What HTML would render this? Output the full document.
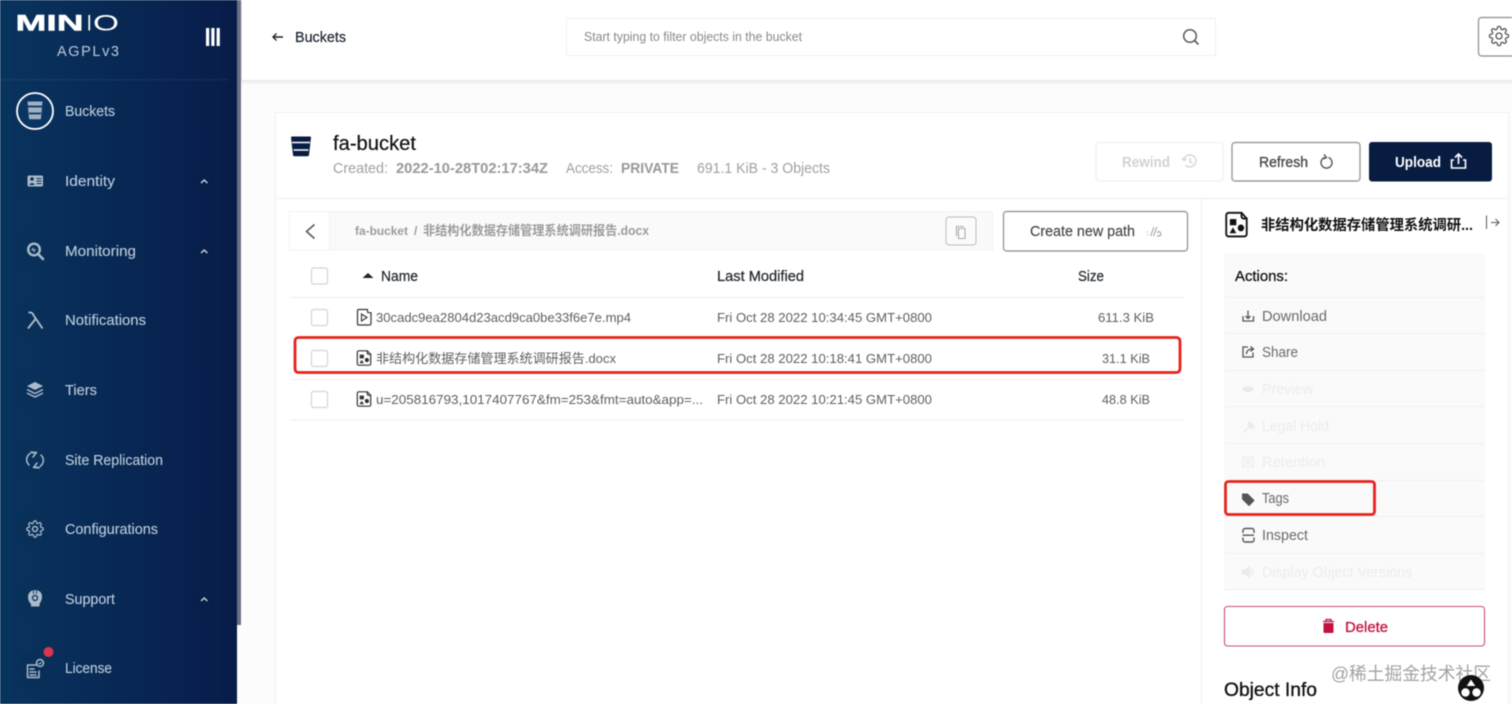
<!DOCTYPE html>
<html><head><meta charset="utf-8"><title>MinIO Console</title>
<style>
html,body{margin:0;padding:0;width:1512px;height:704px;overflow:hidden;background:#fff}
svg{display:block;filter:blur(.4px)}
text{font-family:"Liberation Sans","Noto Sans CJK SC",sans-serif}
.nav{font-size:15px;fill:#bccbdb;stroke:#bccbdb;stroke-width:.12}
.act{font-size:15px;fill:#6a6a6a}
.dis{font-size:15px;fill:#ececec}
.cell{font-size:13px;fill:#606060}
.th{font-size:15px;fill:#24292f;stroke:#24292f;stroke-width:.25}
.ln{stroke:#f0f0f0;stroke-width:1.2}
.ic{fill:none;stroke:#a9bacb;stroke-width:1.5;stroke-linecap:round;stroke-linejoin:round}
.cb{fill:#fff;stroke:#d4d4d4;stroke-width:1.2}
</style></head><body>
<svg xmlns="http://www.w3.org/2000/svg" width="1512" height="704" viewBox="0 0 1512 704">
<defs>
<linearGradient id="sb" x1="0" x2="1" y1="0" y2="0"><stop offset="0" stop-color="#08345e"/><stop offset="1" stop-color="#081c4a"/></linearGradient>
<linearGradient id="hs" x1="0" x2="0" y1="0" y2="1"><stop offset="0" stop-color="#e9e9e9"/><stop offset="1" stop-color="#fbfbfb"/></linearGradient>
<path id="gear" d="M19.4 15a1.65 1.65 0 0 0 .33 1.82l.06.06a2 2 0 0 1 0 2.83 2 2 0 0 1-2.83 0l-.06-.06a1.65 1.65 0 0 0-1.82-.33 1.65 1.65 0 0 0-1 1.51V21a2 2 0 0 1-2 2 2 2 0 0 1-2-2v-.09A1.65 1.65 0 0 0 9 19.4a1.65 1.65 0 0 0-1.82.33l-.06.06a2 2 0 0 1-2.83 0 2 2 0 0 1 0-2.83l.06-.06a1.65 1.65 0 0 0 .33-1.82 1.65 1.65 0 0 0-1.51-1H3a2 2 0 0 1-2-2 2 2 0 0 1 2-2h.09A1.65 1.65 0 0 0 4.6 9a1.65 1.65 0 0 0-.33-1.82l-.06-.06a2 2 0 0 1 0-2.83 2 2 0 0 1 2.83 0l.06.06a1.65 1.65 0 0 0 1.82.33H9a1.65 1.65 0 0 0 1-1.51V3a2 2 0 0 1 2-2 2 2 0 0 1 2 2v.09a1.65 1.65 0 0 0 1 1.51 1.65 1.65 0 0 0 1.82-.33l.06-.06a2 2 0 0 1 2.83 0 2 2 0 0 1 0 2.83l-.06.06a1.65 1.65 0 0 0-.33 1.82V9a1.65 1.65 0 0 0 1.51 1H21a2 2 0 0 1 2 2 2 2 0 0 1-2 2h-.09a1.65 1.65 0 0 0-1.51 1z"/>
<g id="doc">
<path d="M2.300 0.800H10.800V3a1.300 1.300 0 0 0 1.300 1.300H14.200V13.700a1.500 1.500 0 0 1-1.500 1.500H2.300a1.500 1.500 0 0 1-1.500-1.500V2.300a1.500 1.500 0 0 1 1.500-1.500z" fill="#fff" stroke="currentColor" stroke-width="1.200"/>
<path d="M10.800 .8L14.200 4.300" stroke="currentColor" stroke-width="1.100"/>
<rect x="3.200" y="4.600" width="4.200" height="3.800" fill="currentColor"/>
<circle cx="10.400" cy="10" r="2.100" fill="currentColor"/>
<path d="M3 13.300L5.200 9.700L7.400 13.300z" fill="currentColor"/>
</g>
</defs>

<!-- page background -->
<rect width="1512" height="704" fill="#fcfcfc"/>
<rect x="237" width="1275" height="80" fill="#fff"/>
<rect x="237" y="80" width="1275" height="5" fill="url(#hs)"/>

<!-- sidebar -->
<rect width="237" height="704" fill="url(#sb)"/>
<rect x="237" width="4" height="625" fill="#6e7084"/>
<rect x="241" width="1" height="80" fill="#e8e8e8"/>
<rect x="0" y="79" width="228" height="1.500" fill="#fff" opacity=".05"/>

<text x="15.500" y="30.500" font-size="22.500" font-weight="bold" fill="#fff" stroke="#fff" stroke-width=".5" textLength="68" lengthAdjust="spacingAndGlyphs">MIN</text>
<text x="86.800" y="30.500" font-size="22.500" fill="#fff" textLength="5" lengthAdjust="spacingAndGlyphs">I</text>
<text x="93" y="30.500" font-size="22.500" fill="#fff" textLength="26" lengthAdjust="spacingAndGlyphs">O</text>
<text x="57" y="56" font-size="14.500" fill="#bccbdb" textLength="62" lengthAdjust="spacing">AGPLv3</text>
<g fill="#fff"><rect x="206" y="28" width="3.200" height="18"/><rect x="211.300" y="28" width="3.200" height="18"/><rect x="216.600" y="28" width="3.200" height="18"/></g>

<!-- nav circles -->
<g fill="#0a3058" opacity=".9">
<circle cx="35" cy="181" r="19"/><circle cx="35" cy="251" r="19"/><circle cx="35" cy="320" r="19"/><circle cx="35" cy="390" r="19"/><circle cx="35" cy="460" r="19"/><circle cx="35" cy="529" r="19"/><circle cx="35" cy="599" r="19"/><circle cx="35" cy="669" r="19"/>
</g>
<circle cx="35" cy="111" r="18" fill="#0a3461" stroke="#fff" stroke-width="1.800"/>
<!-- Buckets icon -->
<path d="M27.500 101.500H42.500L41 118.500a1 1 0 0 1-1 .8H30a1 1 0 0 1-1-.8z" fill="#9fb0c2"/>
<path d="M28 106.500H42M29 113.500H41" stroke="#0a3461" stroke-width="1.700"/>
<!-- Identity -->
<rect x="27.500" y="175.500" width="15.500" height="11" rx="1.500" fill="#a9bacb"/>
<circle cx="32" cy="179" r="1.800" fill="#0a3058"/><path d="M29.500 185c0-2.500 5-2.500 5 0z" fill="#0a3058"/>
<path d="M36.500 178.500h5M36.500 181h5M36.500 183.500h5" stroke="#0a3058" stroke-width="1"/>
<!-- Monitoring -->
<circle cx="34" cy="249.500" r="5.800" fill="none" stroke="#a9bacb" stroke-width="2.400"/>
<path d="M38.500 254.500L43 259" stroke="#a9bacb" stroke-width="2.600" stroke-linecap="round"/>
<path d="M31.500 250.500l1.500-2 1 3 1.500-2.500" fill="none" stroke="#a9bacb" stroke-width="1"/>
<!-- lambda -->
<path d="M28.500 312.500c3.500-.5 4.500 1 5.500 3.500L42.500 328.500M35.500 319L28 328.500" fill="none" stroke="#a9bacb" stroke-width="1.900"/>
<!-- Tiers -->
<path d="M35 382l8 4-8 4-8-4z" fill="#a9bacb"/>
<path d="M27 389.500l8 4 8-4M27 393l8 4 8-4" fill="none" stroke="#a9bacb" stroke-width="1.500"/>
<!-- Site replication -->
<path class="ic" d="M30 453.500c-4 3-4.500 8-1 11.500M40 466.500c4-3 4.500-8 1-11.500M31 452l5 1-3 4M39 468l-5-1 3-4"/>
<path class="ic" d="M32 452.800c1.500-.5 3-.6 4.500-.3M38 467.200c-1.500.5-3 .6-4.500.3"/>
<!-- Configurations -->
<use href="#gear" transform="translate(26 520) scale(.75)" fill="none" stroke="#a9bacb" stroke-width="1.700"/>
<circle cx="35" cy="529" r="2.500" class="ic" stroke-width="1.200"/>
<!-- Support -->
<path d="M35 590c5 0 7.500 3.500 7 7.500-.3 3-1.500 4.500-2.500 6.500v2.500H31v-2.500c-1.500-1.500-3-4-3-7 0-4 3-7 7-7z" fill="#a9bacb"/>
<circle cx="35" cy="598" r="2.500" fill="none" stroke="#0a3058" stroke-width="1.200"/>
<path d="M33.500 590v4M36.500 590v4" stroke="#0a3058" stroke-width=".8"/>
<!-- License -->
<path class="ic" stroke-width="1.200" d="M37 665H27.500v12.500H39V671M30 669h4M30 672h6M30 675h6"/>
<circle cx="40" cy="663" r="3.500" class="ic" stroke-width="1.100"/>
<path d="M38.500 663l1.200 1.200 2-2.200" fill="none" stroke="#a9bacb" stroke-width="1"/>
<circle cx="48.500" cy="652" r="5" fill="#dc3550"/>
<!-- chevrons -->
<g fill="#071f4a" opacity=".55"><circle cx="204" cy="181" r="10"/><circle cx="204" cy="251" r="10"/><circle cx="204" cy="599" r="10"/></g>
<g fill="none" stroke="#d5dde6" stroke-width="1.300"><path d="M201 183l3.200-3 3.200 3M201 253l3.200-3 3.200 3M201 601l3.200-3 3.200 3"/></g>
<!-- nav labels -->
<text class="nav" x="65" y="116" textLength="50" lengthAdjust="spacingAndGlyphs">Buckets</text>
<text class="nav" x="65" y="186" textLength="50" lengthAdjust="spacingAndGlyphs">Identity</text>
<text class="nav" x="65" y="256" textLength="71" lengthAdjust="spacingAndGlyphs">Monitoring</text>
<text class="nav" x="65" y="325" textLength="81" lengthAdjust="spacingAndGlyphs">Notifications</text>
<text class="nav" x="65" y="395" textLength="32" lengthAdjust="spacingAndGlyphs">Tiers</text>
<text class="nav" x="65" y="465" textLength="98" lengthAdjust="spacingAndGlyphs">Site Replication</text>
<text class="nav" x="65" y="534" textLength="93" lengthAdjust="spacingAndGlyphs">Configurations</text>
<text class="nav" x="65" y="604" textLength="50" lengthAdjust="spacingAndGlyphs">Support</text>
<text class="nav" x="65" y="673" textLength="47" lengthAdjust="spacingAndGlyphs">License</text>

<!-- header -->
<path d="M283 37H273M276.500 33.500L273 37l3.500 3.500" fill="none" stroke="#222" stroke-width="1.400"/>
<text x="295" y="42" font-size="15" fill="#1c2430" stroke="#1c2430" stroke-width=".2" textLength="51" lengthAdjust="spacingAndGlyphs">Buckets</text>
<rect x="566.500" y="18.500" width="649" height="37" fill="#fff" stroke="#f0f0f0"/>
<text x="584" y="41" font-size="12.500" fill="#8a8a8a" textLength="218" lengthAdjust="spacingAndGlyphs">Start typing to filter objects in the bucket</text>
<circle cx="1190" cy="36" r="6.300" fill="none" stroke="#5a5a5a" stroke-width="1.500"/>
<path d="M1194.500 40.500L1198.500 44.500" stroke="#5a5a5a" stroke-width="1.600"/>
<rect x="1478.500" y="17.500" width="50" height="38.500" rx="3" fill="#fff" stroke="#8c8c8c" stroke-width="1.200"/>
<use href="#gear" transform="translate(1488.500 25.500) scale(.875)" fill="none" stroke="#555" stroke-width="1.500"/>
<circle cx="1499" cy="36" r="3" fill="none" stroke="#555" stroke-width="1.300"/>

<!-- card -->
<rect x="275.500" y="112.500" width="1233" height="600" fill="#fff" stroke="#f2f2f2"/>
<path d="M291 137.500a1 1 0 0 1 1-1H310a1 1 0 0 1 1 1L309 155a1.500 1.500 0 0 1-1.500 1.300H294.500A1.500 1.500 0 0 1 293 155z" fill="#081c42"/>
<path d="M292 142.500H310M293.500 150H308.500" stroke="#fff" stroke-width="1.600"/>
<text x="333" y="150" font-size="20" fill="#111" stroke="#111" stroke-width=".2" textLength="83" lengthAdjust="spacingAndGlyphs">fa-bucket</text>
<text x="333" y="173" font-size="15" fill="#a0a0a0" textLength="55" lengthAdjust="spacingAndGlyphs">Created:</text>
<text x="396" y="173" font-size="15" font-weight="bold" fill="#999" textLength="152" lengthAdjust="spacingAndGlyphs">2022-10-28T02:17:34Z</text>
<text x="566" y="173" font-size="15" fill="#a0a0a0" textLength="47" lengthAdjust="spacingAndGlyphs">Access:</text>
<text x="621" y="173" font-size="15" font-weight="bold" fill="#999" textLength="58" lengthAdjust="spacingAndGlyphs">PRIVATE</text>
<text x="697" y="173" font-size="15" fill="#a0a0a0" textLength="133" lengthAdjust="spacingAndGlyphs">691.1 KiB - 3 Objects</text>

<!-- buttons -->
<rect x="1096" y="142.500" width="127" height="38.500" rx="3" fill="#fff" stroke="#f0f0f0" stroke-width="1.200"/>
<text x="1122" y="167" font-size="15" font-weight="bold" fill="#d2d2d2" textLength="48" lengthAdjust="spacingAndGlyphs">Rewind</text>
<path d="M1184 160a6 6 0 1 1 1.500 5M1182 158l2 2.500 2.500-1.500M1190 158v4l2.500 1.500" fill="none" stroke="#d2d2d2" stroke-width="1.300"/>
<rect x="1232" y="142.500" width="128" height="38.500" rx="3" fill="#fff" stroke="#8c8c8c" stroke-width="1.200"/>
<text x="1259" y="167" font-size="15" fill="#444" stroke="#444" stroke-width=".3" textLength="49" lengthAdjust="spacingAndGlyphs">Refresh</text>
<path d="M1328.500 157.500a5.500 5.500 0 1 1-4 0M1324 154.500l2.500 3-3 1.500" fill="none" stroke="#555" stroke-width="1.400"/>
<rect x="1369" y="142" width="123" height="39.500" rx="3" fill="#081c42"/>
<text x="1395" y="167" font-size="15" font-weight="bold" fill="#fff" textLength="46" lengthAdjust="spacingAndGlyphs">Upload</text>
<path d="M1454 160h-2.500v8h14v-8H1463M1458.500 164v-9.500M1455 157.500l3.500-3.500 3.500 3.500" fill="none" stroke="#fff" stroke-width="1.600"/>

<path class="ln" d="M275 198.500H1509"/>
<path class="ln" d="M1201.500 198V704"/>

<!-- breadcrumb -->
<rect x="289.500" y="211.500" width="703" height="38.500" fill="#fafafa" stroke="#f3f3f3"/>
<rect x="289.500" y="211.500" width="40" height="38.500" fill="#fff" stroke="#f3f3f3"/>
<path d="M314.500 224.500L306.500 231.500L314.500 238.500" fill="none" stroke="#555" stroke-width="1.500"/>
<text x="355" y="235" font-size="12" font-weight="bold" fill="#9b9b9b" textLength="53" lengthAdjust="spacingAndGlyphs">fa-bucket</text>
<text x="414" y="235" font-size="12" font-weight="bold" fill="#9b9b9b">/</text>
<text x="423" y="235" font-size="12.800" font-weight="bold" fill="#9b9b9b" textLength="226" lengthAdjust="spacingAndGlyphs">非结构化数据存储管理系统调研报告.docx</text>
<rect x="946" y="217" width="30" height="28" rx="3" fill="#fbfbfb" stroke="#bdbdbd"/>
<path d="M956.500 236v-9.500h7.500M958.500 228.500h6.500v10h-6.500z" fill="none" stroke="#aaa" stroke-width="1.100"/>
<rect x="1003.500" y="211.500" width="184" height="39.500" rx="3" fill="#fff" stroke="#8c8c8c" stroke-width="1.200"/>
<text x="1030" y="236" font-size="15" fill="#444" stroke="#444" stroke-width=".15" textLength="105" lengthAdjust="spacingAndGlyphs">Create new path</text>
<path d="M1147.500 231.500v.8M1147.500 234.500v.8M1150.500 236l3.500-9M1153.500 236l3.500-9M1157 236c3 0 4.500-.5 3.500-3s-3-1-3 0" fill="none" stroke="#999" stroke-width="1"/>

<!-- table head -->
<rect class="cb" x="311.500" y="268" width="16" height="16" rx="2"/>
<path d="M362.500 278L368 273L373.500 278z" fill="#222"/>
<text class="th" x="381" y="281" textLength="37" lengthAdjust="spacingAndGlyphs">Name</text>
<text class="th" x="717" y="281" textLength="87" lengthAdjust="spacingAndGlyphs">Last Modified</text>
<text class="th" x="1078" y="281" textLength="26" lengthAdjust="spacingAndGlyphs">Size</text>
<path class="ln" d="M291 297.500H1184M291 338.500H1184M291 379.500H1184M291 420H1184"/>

<!-- rows -->
<rect class="cb" x="311.500" y="309.500" width="16" height="16" rx="2"/>
<rect class="cb" x="311.500" y="350.500" width="16" height="16" rx="2"/>
<rect class="cb" x="311.500" y="391.500" width="16" height="16" rx="2"/>
<path d="M358.800 309.500H367.500V311.500a1.200 1.200 0 0 0 1.200 1.200H371V323.700a1.300 1.300 0 0 1-1.300 1.300H358.800a1.300 1.300 0 0 1-1.300-1.300V310.800a1.300 1.300 0 0 1 1.300-1.300z" fill="#fff" stroke="#333" stroke-width="1.200"/>
<path d="M361.500 314L367 317.500L361.500 321z" fill="none" stroke="#333" stroke-width="1.100"/>
<use href="#doc" transform="translate(356.500 350)" color="#333"/>
<use href="#doc" transform="translate(356.500 391)" color="#333"/>
<text class="cell" x="376" y="322" textLength="255" lengthAdjust="spacingAndGlyphs">30cadc9ea2804d23acd9ca0be33f6e7e.mp4</text>
<text class="cell" x="376" y="363" textLength="240" lengthAdjust="spacingAndGlyphs">非结构化数据存储管理系统调研报告.docx</text>
<text class="cell" x="376" y="404" textLength="327" lengthAdjust="spacingAndGlyphs">u=205816793,1017407767&amp;fm=253&amp;fmt=auto&amp;app=...</text>
<text class="cell" x="717" y="322" textLength="215" lengthAdjust="spacingAndGlyphs">Fri Oct 28 2022 10:34:45 GMT+0800</text>
<text class="cell" x="717" y="363" textLength="215" lengthAdjust="spacingAndGlyphs">Fri Oct 28 2022 10:18:41 GMT+0800</text>
<text class="cell" x="717" y="404" textLength="215" lengthAdjust="spacingAndGlyphs">Fri Oct 28 2022 10:21:45 GMT+0800</text>
<text class="cell" x="1098" y="322" textLength="56" lengthAdjust="spacingAndGlyphs">611.3 KiB</text>
<text class="cell" x="1102" y="363" textLength="48" lengthAdjust="spacingAndGlyphs">31.1 KiB</text>
<text class="cell" x="1102" y="404" textLength="48" lengthAdjust="spacingAndGlyphs">48.8 KiB</text>
<rect x="295" y="337.500" width="885" height="35" rx="3.500" fill="none" stroke="#e8211c" stroke-width="2.800"/>

<!-- detail header -->
<use href="#doc" transform="translate(1225 211.500) scale(1.530 1.640)" color="#111"/>
<text x="1261" y="230" font-size="14.500" font-weight="bold" fill="#111" textLength="212" lengthAdjust="spacingAndGlyphs">非结构化数据存储管理系统调研...</text>
<path d="M1486.500 215.500V229M1491 222.500H1499M1495.500 219L1499 222.500L1495.500 226" fill="none" stroke="#555" stroke-width="1"/>

<!-- actions -->
<rect x="1224" y="254" width="261" height="336" fill="#fafafa"/>
<path d="M1224 297.500H1485M1224 333.500H1485M1224 370.500H1485M1224 406.500H1485M1224 443.500H1485M1224 480.500H1485M1224 516.500H1485M1224 553.500H1485M1224 589.500H1485" stroke="#efefef" stroke-width="1"/>
<text x="1235" y="281" font-size="15" fill="#111" stroke="#111" stroke-width=".3" textLength="53" lengthAdjust="spacingAndGlyphs">Actions:</text>
<text class="act" x="1262" y="321" textLength="65" lengthAdjust="spacingAndGlyphs">Download</text>
<text class="act" x="1262" y="357" textLength="36" lengthAdjust="spacingAndGlyphs">Share</text>
<text class="dis" x="1262" y="394" textLength="51" lengthAdjust="spacingAndGlyphs">Preview</text>
<text class="dis" x="1262" y="431" textLength="67" lengthAdjust="spacingAndGlyphs">Legal Hold</text>
<text class="dis" x="1262" y="467" textLength="63" lengthAdjust="spacingAndGlyphs">Retention</text>
<text class="act" x="1262" y="503" textLength="27" lengthAdjust="spacingAndGlyphs">Tags</text>
<text class="act" x="1262" y="540" textLength="46" lengthAdjust="spacingAndGlyphs">Inspect</text>
<text class="dis" x="1262" y="577" textLength="150" lengthAdjust="spacingAndGlyphs">Display Object Versions</text>
<!-- action icons -->
<path d="M1243 316v5h10.500v-5M1248 310.500v8M1245.500 316l2.500 2.500 2.500-2.500" fill="none" stroke="#555" stroke-width="1.300"/>
<path d="M1248 347h-5v10h10v-4.500M1246.500 354c0-3 2-5 6-5M1250.500 346.500l3 2.500-3 2.500" fill="none" stroke="#555" stroke-width="1.300"/>
<path d="M1242 389c3-4 9-4 12 0-3 4-9 4-12 0z" fill="#eaeaea"/>
<path d="M1243 432l6-6-2-2 3-3 5 6-3 2-2-2-6 6z" fill="#eaeaea"/>
<path d="M1243 457h10v10h-10zM1245.500 460h5M1245.500 462h5M1245.500 464h5" fill="none" stroke="#eaeaea" stroke-width="1.100"/>
<path d="M1242.500 494h5l6.500 6.500-5 5-6.500-6.500z" fill="#555" stroke="#555" stroke-width="1" stroke-linejoin="round"/>
<path d="M1243 533v-2.500a2 2 0 0 1 2-2h7a2 2 0 0 1 2 2v2.500M1243 537.500v2.500a2 2 0 0 0 2 2h7a2 2 0 0 0 2-2v-2.500M1242.500 535.200H1254" fill="none" stroke="#555" stroke-width="1.400"/>
<path d="M1242 570h3l4-3v10l-4-3h-3zM1251 568v8M1253 569v6" fill="#eaeaea" stroke="#eaeaea"/>
<rect x="1225.500" y="481.500" width="149" height="33" rx="3" fill="none" stroke="#e8211c" stroke-width="2.800"/>

<!-- delete -->
<rect x="1224.500" y="606.500" width="260" height="39.500" rx="3" fill="#fff" stroke="#c9506f" stroke-width="1.100"/>
<path d="M1323 621.500h11M1326 621v-1.500h5v1.500" fill="none" stroke="#c1133f" stroke-width="1.300"/>
<path d="M1323.500 623h10v9a1 1 0 0 1-1 1h-8a1 1 0 0 1-1-1z" fill="#c1133f"/>
<text x="1345" y="632" font-size="15" fill="#c1133f" stroke="#c1133f" stroke-width=".3" textLength="43" lengthAdjust="spacingAndGlyphs">Delete</text>

<!-- object info -->
<text x="1224" y="696" font-size="19" fill="#111" stroke="#111" stroke-width=".35" textLength="93" lengthAdjust="spacingAndGlyphs">Object Info</text>
<text x="1331" y="680" font-size="18" fill="#a3a3a3" textLength="160" lengthAdjust="spacingAndGlyphs">@稀土掘金技术社区</text>
<circle cx="1471" cy="688" r="13" fill="#111"/>
<path d="M1471 679.500l4.300 6.500h-8.600z" fill="#fff"/>
<circle cx="1465.500" cy="692.500" r="4.200" fill="#fff"/><circle cx="1476.500" cy="692.500" r="4.200" fill="#fff"/>
</svg>
</body></html>
